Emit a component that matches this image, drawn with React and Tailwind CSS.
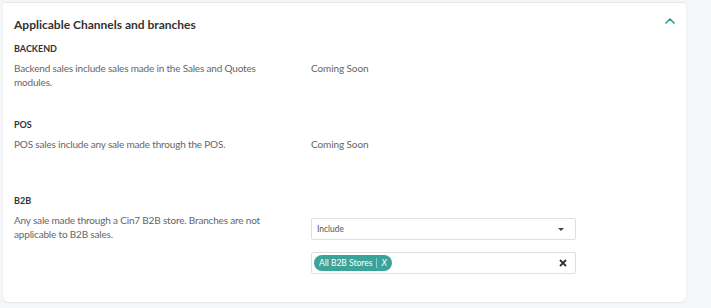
import { ChevronUp } from 'lucide-react';

const font = { fontFamily: 'Lato, "Open Sans", sans-serif' };

function Section({ label, text, children, className = '', rightPad = 'pt-[18px]' }) {
  return (
    <div className={`flex ${className}`}>
      <div className="w-[297px] shrink-0">
        <div className="text-[9px] font-bold text-[#333] leading-[12px]">{label}</div>
        <p className="mt-[6px] text-[10px] tracking-[-0.18px] leading-[14px] text-[#666]">{text}</p>
      </div>
      <div className={`${rightPad} text-[10px] tracking-[-0.1px] leading-[14px] text-[#666]`}>{children}</div>
    </div>
  );
}

export default function App() {
  return (
    <div className="w-[711px] h-[308px] bg-[#f4f6f8] pt-[2px] pl-[3px] overflow-hidden" style={font}>
      <div className="w-[683px] h-[300px] bg-white border-t border-[#e6e9ec] rounded-b-[6px] shadow-[0_1px_2px_rgba(0,0,0,0.08)] px-[11px] pt-[13px]">
        <div className="flex items-start justify-between">
          <h2 className="text-[12px] font-bold text-[#333] leading-[18px]">Applicable Channels and branches</h2>
          <ChevronUp className="w-[16px] h-[16px] -mt-[3px] -mr-[3px] text-[#2f9e93]" strokeWidth={2.5} />
        </div>

        <Section
          className="mt-[9px]"
          label="BACKEND"
          text={<>Backend sales include sales made in the Sales and Quotes<br />modules.</>}
        >
          Coming Soon
        </Section>

        <Section className="mt-[30px]" label="POS" text="POS sales include any sale made through the POS.">
          Coming Soon
        </Section>

        <Section
          className="mt-[44px]"
          rightPad="pt-[23px]"
          label="B2B"
          text={<>Any sale made through a Cin7 B2B store. Branches are not<br />applicable to B2B sales.</>}
        >
          <div className="w-[265px] flex flex-col gap-[12px] tracking-normal">
            <div className="h-[22px] border border-[#dcdfe3] rounded-[2px] flex items-center justify-between px-[5px]">
              <span className="text-[8.5px] text-[#555]">Include</span>
              <svg width="8" height="5" viewBox="0 0 8 5" className="mr-[5px]">
                <path d="M1 1h6L4 4z" fill="#444" />
              </svg>
            </div>
            <div className="h-[22px] border border-[#dcdfe3] rounded-[2px] flex items-center justify-between pl-[2px] pr-[8px]">
              <span className="h-[16px] rounded-full bg-[#3aa39a] text-white text-[8.5px] flex items-center pl-[5px] pr-[5px]">
                All B2B Stores
                <span className="mx-[4px] h-[10px] w-px bg-[#8fd0ca]" />
                <span className="italic text-[9px]">X</span>
              </span>
              <svg width="8" height="8" viewBox="0 0 8 8">
                <path d="M1 1l6 6M7 1L1 7" stroke="#333" strokeWidth="1.8" />
              </svg>
            </div>
          </div>
        </Section>
      </div>
    </div>
  );
}
